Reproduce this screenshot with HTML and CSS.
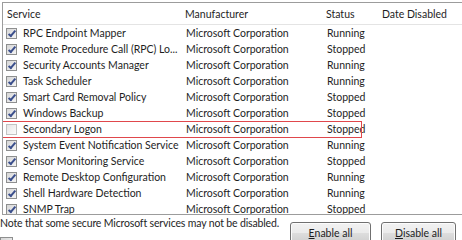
FILE: index.html
```html
<!DOCTYPE html>
<html lang="en">

<head>
    <meta charset="UTF-8">
    <title>System Configuration - Services</title>
    <link rel="stylesheet" href="styles.css">
</head>

<body>
    <div class="list">
        <div class="head">
            <span class="col-service">Service</span>
            <span>Manufacturer</span>
            <span>Status</span>
            <span>Date Disabled</span>
        </div>

        <div class="row">
            <span class="col-service"><i class="box on"></i>RPC Endpoint Mapper</span>
            <span>Microsoft Corporation</span>
            <span>Running</span>
            <span></span>
        </div>
        <div class="row">
            <span class="col-service"><i class="box on"></i>Remote Procedure Call (RPC) Lo...</span>
            <span>Microsoft Corporation</span>
            <span>Stopped</span>
            <span></span>
        </div>
        <div class="row">
            <span class="col-service"><i class="box on"></i>Security Accounts Manager</span>
            <span>Microsoft Corporation</span>
            <span>Running</span>
            <span></span>
        </div>
        <div class="row">
            <span class="col-service"><i class="box on"></i>Task Scheduler</span>
            <span>Microsoft Corporation</span>
            <span>Running</span>
            <span></span>
        </div>
        <div class="row">
            <span class="col-service"><i class="box on"></i>Smart Card Removal Policy</span>
            <span>Microsoft Corporation</span>
            <span>Stopped</span>
            <span></span>
        </div>
        <div class="row">
            <span class="col-service"><i class="box on"></i>Windows Backup</span>
            <span>Microsoft Corporation</span>
            <span>Stopped</span>
            <span></span>
        </div>
        <div class="row marked">
            <span class="col-service"><i class="box"></i>Secondary Logon</span>
            <span>Microsoft Corporation</span>
            <span>Stopped</span>
            <span></span>
        </div>
        <div class="row">
            <span class="col-service"><i class="box on"></i>System Event Notification Service</span>
            <span>Microsoft Corporation</span>
            <span>Running</span>
            <span></span>
        </div>
        <div class="row">
            <span class="col-service"><i class="box on"></i>Sensor Monitoring Service</span>
            <span>Microsoft Corporation</span>
            <span>Stopped</span>
            <span></span>
        </div>
        <div class="row">
            <span class="col-service"><i class="box on"></i>Remote Desktop Configuration</span>
            <span>Microsoft Corporation</span>
            <span>Running</span>
            <span></span>
        </div>
        <div class="row">
            <span class="col-service"><i class="box on"></i>Shell Hardware Detection</span>
            <span>Microsoft Corporation</span>
            <span>Running</span>
            <span></span>
        </div>
        <div class="row">
            <span class="col-service"><i class="box on"></i>SNMP Trap</span>
            <span>Microsoft Corporation</span>
            <span>Stopped</span>
            <span></span>
        </div>
    </div>

    <div class="footer">
        <div class="note-area">
            <p class="note">Note that some secure Microsoft services may not be disabled.</p>
            <i class="box"></i>
        </div>
        <button class="btn btn-enable"><u>E</u>nable all</button>
        <button class="btn btn-disable"><u>D</u>isable all</button>
    </div>
</body>

</html>
```

FILE: styles.css
```css
/* Services tab */
body {
    font-family: 'Lato', 'Open Sans', sans-serif;
    font-size: 10.5px;
    color: #1e1e1e;
    background-color: #ffffff;
    margin: 0;
    padding: 0;
    overflow: hidden;
}

.list {
    margin: 2px 0 0 2px;
    height: 211px;
    border-top: 1px solid #9c9c9c;
    border-left: 1px solid #9c9c9c;
    border-bottom: 1px solid #9c9c9c;
    overflow: hidden;
}

.head,
.row {
    display: grid;
    grid-template-columns: 178px 141px 56px 1fr;
    align-items: center;
    white-space: nowrap;
}

.head {
    height: 21px;
    border-bottom: 1px solid #e4e4e4;
}

.head span {
    padding-left: 4px;
}

.row {
    height: 16px;
    position: relative;
}

.row span {
    padding-left: 5px;
}

.row .col-service {
    display: flex;
    align-items: center;
    padding-left: 3px;
}

.row.marked::after {
    content: "";
    position: absolute;
    left: -1px;
    top: 0;
    width: 358px;
    height: 15px;
    border: 1px solid #e0474c;
}

/* checkbox */
.box {
    display: inline-block;
    width: 9px;
    height: 9px;
    border: 1px solid #8e8f8f;
    background: linear-gradient(135deg, #d6d6d6, #f4f4f4);
    margin-right: 6px;
    position: relative;
}

.box.on::after {
    content: "";
    position: absolute;
    left: 3px;
    top: 0;
    width: 2px;
    height: 6px;
    border-right: 2px solid #3b4f8c;
    border-bottom: 2px solid #3b4f8c;
    transform: rotate(40deg);
}

.row .box:not(.on) {
    border-color: #c3c3c3;
    background: linear-gradient(135deg, #e6e6e6, #fbfbfb);
}

/* bottom */
.footer {
    display: flex;
    align-items: flex-start;
}

.note-area {
    width: 290px;
}

.note {
    margin: 0;
    line-height: 14px;
    padding-top: 1px;
    white-space: nowrap;
    letter-spacing: -0.15px;
}

.note-area .box {
    margin: 7px 0 0 0;
    width: 11px;
    height: 11px;
}

.btn {
    margin-top: 7px;
    height: 22px;
    padding: 0;
    font-family: inherit;
    font-size: 10.5px;
    color: #1e1e1e;
    border: 1px solid #707070;
    border-radius: 3px;
    background: linear-gradient(#f2f2f2 0%, #ebebeb 48%, #dddddd 52%, #cfcfcf 100%);
    box-shadow: inset 0 0 0 1px #fcfcfc;
}

.btn-enable {
    width: 81px;
}

.btn-disable {
    width: 75px;
    margin-left: 10px;
}
```
